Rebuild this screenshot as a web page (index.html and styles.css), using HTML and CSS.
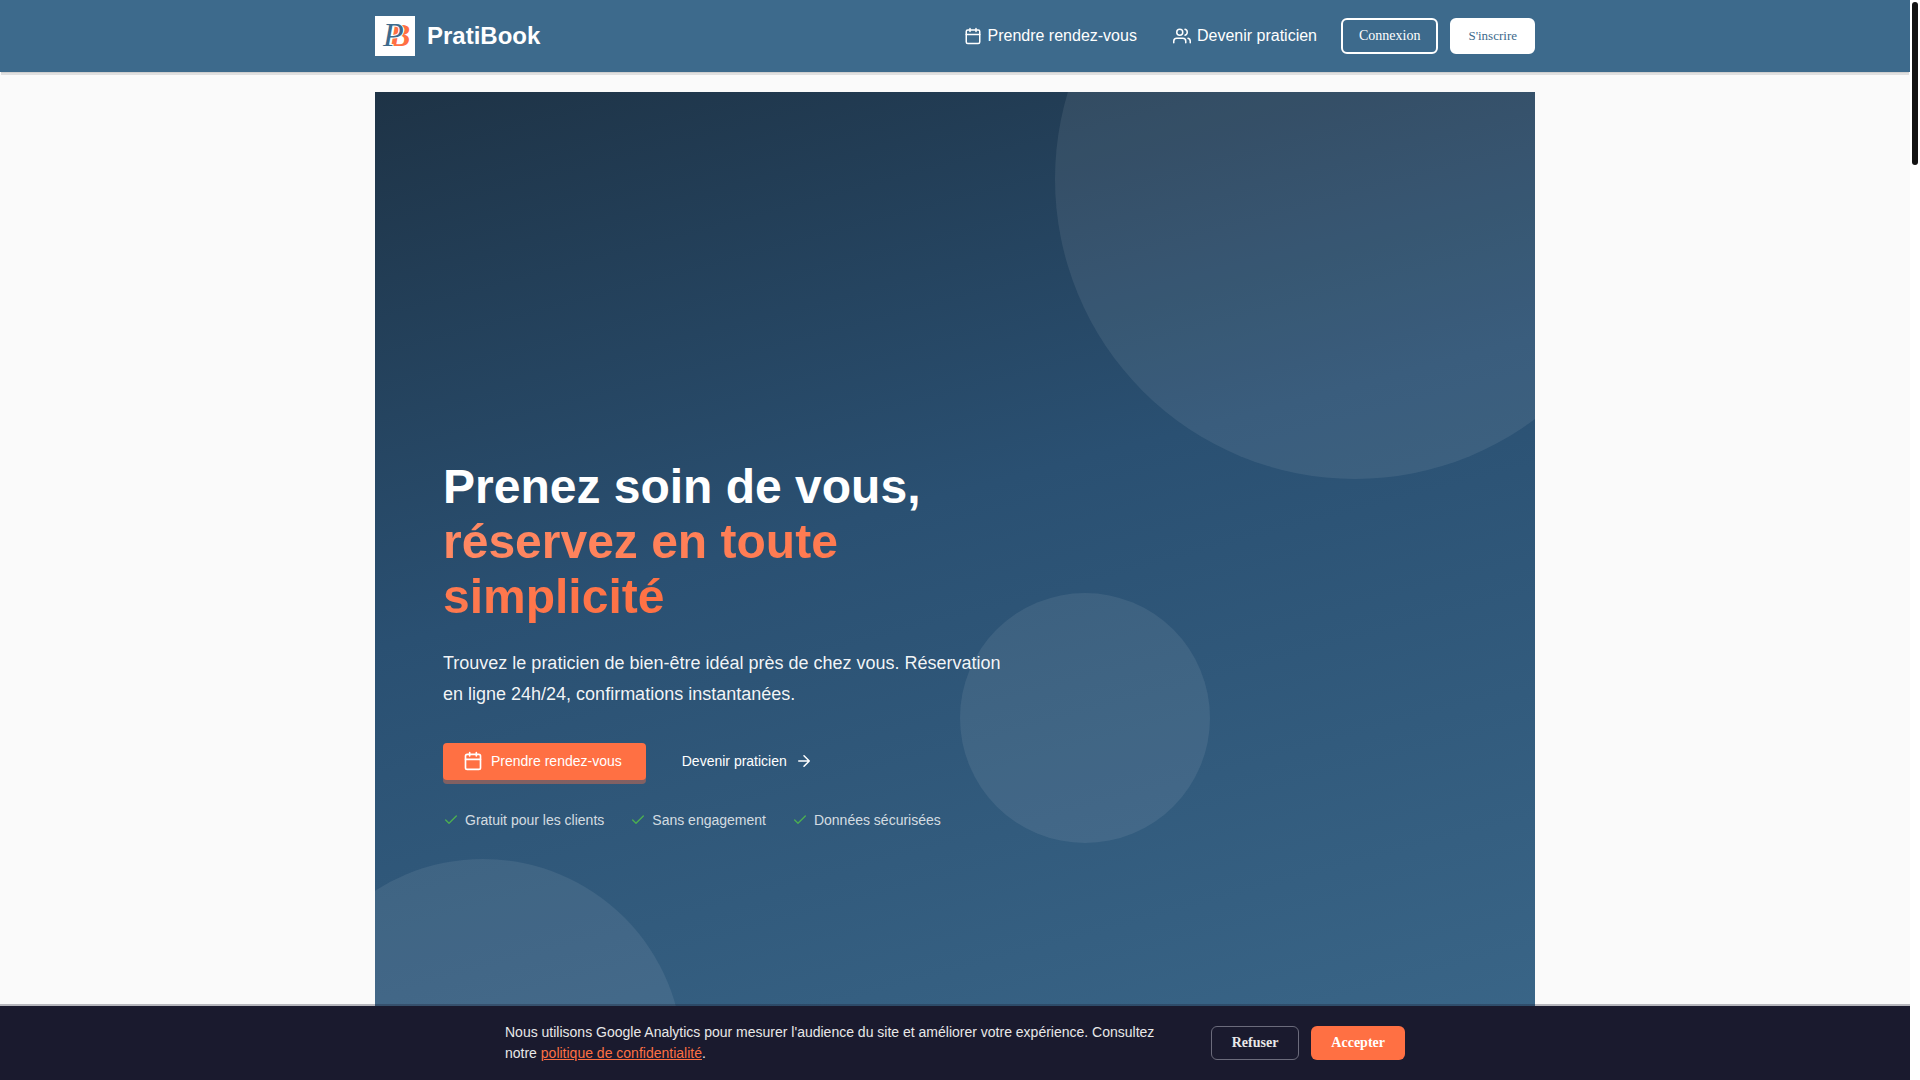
FILE: index.html
```html
<!DOCTYPE html>
<html lang="fr">
<head>
    <meta charset="UTF-8">
    <meta name="viewport" content="width=device-width, initial-scale=1.0">
    <title>PratiBook</title>
    <link rel="stylesheet" href="styles.css">
</head>
<body>

    <div class="page">
        <header class="header">
            <div class="container header-inner">
                <a class="brand" href="#">
                    <svg class="brand-logo" viewBox="0 0 40 40" aria-hidden="true">
                        <rect width="40" height="40" fill="#fff"/>
                        <text class="logo-b" x="14" y="30">B</text>
                        <text class="logo-p" x="8" y="30">P</text>
                    </svg>
                    <span>PratiBook</span>
                </a>

                <nav class="nav">
                    <a class="nav-link" href="#">
                        <svg class="icon" viewBox="0 0 24 24"><rect x="3" y="4" width="18" height="18" rx="2"/><path d="M16 2v4M8 2v4M3 10h18"/></svg>
                        Prendre rendez-vous
                    </a>
                    <a class="nav-link" href="#">
                        <svg class="icon" viewBox="0 0 24 24"><path d="M17 21v-2a4 4 0 0 0-4-4H5a4 4 0 0 0-4 4v2"/><circle cx="9" cy="7" r="4"/><path d="M23 21v-2a4 4 0 0 0-3-3.87M16 3.13a4 4 0 0 1 0 7.75"/></svg>
                        Devenir praticien
                    </a>
                    <button type="button" class="btn-login">Connexion</button>
                    <button type="button" class="btn-signup">S'inscrire</button>
                </nav>
            </div>
        </header>

        <main class="container">
            <section class="hero">
                <div class="circle circle-top"></div>
                <div class="circle circle-middle"></div>
                <div class="circle circle-bottom"></div>

                <div class="hero-content">
                    <h1>Prenez soin de vous,<br><span class="highlight">réservez en toute simplicité</span></h1>
                    <p class="hero-text">Trouvez le praticien de bien-être idéal près de chez vous. Réservation en ligne 24h/24, confirmations instantanées.</p>

                    <div class="hero-actions">
                        <a class="btn-primary" href="#">
                            <svg class="icon icon-large" viewBox="0 0 24 24"><rect x="3" y="4" width="18" height="18" rx="2"/><path d="M16 2v4M8 2v4M3 10h18"/></svg>
                            Prendre rendez-vous
                        </a>
                        <a class="btn-secondary" href="#">
                            Devenir praticien
                            <svg class="icon" viewBox="0 0 24 24"><path d="M5 12h14M12 5l7 7-7 7"/></svg>
                        </a>
                    </div>

                    <ul class="features">
                        <li><svg class="icon icon-check" viewBox="0 0 24 24"><path d="M20 6 9 17l-5-5"/></svg>Gratuit pour les clients</li>
                        <li><svg class="icon icon-check" viewBox="0 0 24 24"><path d="M20 6 9 17l-5-5"/></svg>Sans engagement</li>
                        <li><svg class="icon icon-check" viewBox="0 0 24 24"><path d="M20 6 9 17l-5-5"/></svg>Données sécurisées</li>
                    </ul>
                </div>
            </section>
        </main>

        <!-- Cookie banner -->
        <div class="cookies">
            <div class="cookies-inner">
                <p>Nous utilisons Google Analytics pour mesurer l'audience du site et améliorer votre expérience. Consultez notre <a href="#">politique de confidentialité</a>.</p>
                <div class="cookies-actions">
                    <button type="button" class="btn-refuse">Refuser</button>
                    <button type="button" class="btn-accept">Accepter</button>
                </div>
            </div>
        </div>
    </div>

    <div class="scrollbar"><div class="scrollbar-thumb"></div></div>

</body>
</html>
```

FILE: styles.css
```css
* {
    box-sizing: border-box;
}

body {
    margin: 0;
    height: 100vh;
    display: flex;
    overflow: hidden;
    background-color: #fafafa;
    font-family: 'Liberation Sans', Arial, sans-serif;
    font-size: 16px;
}

a {
    color: inherit;
    text-decoration: none;
}

button {
    font-family: 'Liberation Serif', 'Times New Roman', serif;
    border-radius: 6px;
    cursor: pointer;
}

.page {
    flex: 1;
    min-width: 0;
    position: relative;
    overflow: hidden;
}

.container {
    max-width: 1200px;
    margin: 0 auto;
    padding: 0 20px;
}

.icon {
    width: 18px;
    height: 18px;
    flex-shrink: 0;
    fill: none;
    stroke: currentColor;
    stroke-width: 2;
    stroke-linecap: round;
    stroke-linejoin: round;
}

/* Header */
.header {
    background-color: #3d6a8c;
    color: white;
    box-shadow: 0 2px 0 -1px #cfcfcf, 0 4px 0 -1px #e0e0e0;
}

.header-inner {
    height: 72px;
    display: flex;
    align-items: center;
    justify-content: space-between;
}

.brand {
    display: flex;
    align-items: center;
    gap: 12px;
    font-size: 24px;
    font-weight: bold;
}

.brand-logo {
    width: 40px;
    height: 40px;
}

.logo-p,
.logo-b {
    font-family: 'Liberation Serif', serif;
    font-style: italic;
}

.logo-p {
    font-weight: normal;
    font-size: 34px;
    fill: #3d6a8c;
    stroke: white;
    stroke-width: 2px;
    paint-order: stroke;
}

.logo-b {
    font-weight: bold;
    font-size: 32px;
    fill: #ff7043;
}

.nav {
    display: flex;
    align-items: center;
    gap: 12px;
}

.nav-link {
    display: flex;
    align-items: center;
    gap: 6px;
    padding: 0 12px;
}

.btn-login,
.btn-signup {
    height: 36px;
    padding: 0 16px;
    border: 2px solid white;
}

.btn-login {
    background-color: transparent;
    color: white;
    font-size: 14px;
}

.btn-signup {
    background-color: white;
    color: #3d6a8c;
    font-size: 13px;
}

/* Hero */
.hero {
    position: relative;
    min-height: 100vh;
    margin-top: 20px;
    padding: 22px 68px 0;
    display: flex;
    align-items: center;
    overflow: hidden;
    color: white;
    background: linear-gradient(165deg, #1e3346 0%, #2a5072 40%, #3d6a8c 100%);
}

.circle {
    position: absolute;
    border-radius: 50%;
    background-color: rgba(255, 255, 255, 0.08);
}

.circle-top {
    width: 600px;
    height: 600px;
    top: -213px;
    right: -120px;
}

.circle-middle {
    width: 250px;
    height: 250px;
    top: 501px;
    right: 325px;
}

.circle-bottom {
    width: 400px;
    height: 400px;
    top: 767px;
    left: -92px;
}

.hero-content {
    position: relative;
    max-width: 580px;
}

h1 {
    margin: 0 0 24px;
    font-size: 48px;
    line-height: 55px;
}

.highlight {
    background: linear-gradient(135deg, #ff8a65, #ff7043);
    background-clip: text;
    -webkit-background-clip: text;
    color: transparent;
}

.hero-text {
    margin: 0 0 33px;
    font-size: 18px;
    line-height: 31px;
    color: rgba(255, 255, 255, 0.95);
}

.hero-actions {
    display: flex;
    gap: 16px;
    margin-bottom: 32px;
    font-size: 14px;
}

.btn-primary,
.btn-secondary {
    display: flex;
    align-items: center;
    gap: 8px;
    height: 37px;
    padding: 0 20px;
    border-radius: 4px;
}

.btn-primary {
    padding-right: 24px;
    background-color: #ff7043;
    box-shadow: 0 4px 0 rgba(255, 112, 67, 0.4);
}

.icon-large {
    width: 20px;
    height: 20px;
}

.features {
    display: flex;
    gap: 26px;
    margin: 0;
    padding: 0;
    list-style: none;
    font-size: 14px;
    color: rgba(255, 255, 255, 0.8);
}

.features li {
    display: flex;
    align-items: center;
    gap: 6px;
}

.icon-check {
    width: 16px;
    height: 16px;
    color: #4caf50;
}

/* Cookie banner */
.cookies {
    position: absolute;
    left: 0;
    right: 0;
    bottom: 0;
    padding: 16px 20px;
    background-color: #1a1a2e;
    color: #e8e8e8;
    box-shadow: 0 -2px 0 rgba(26, 26, 46, 0.3);
}

.cookies-inner {
    max-width: 900px;
    margin: 0 auto;
    display: flex;
    align-items: center;
    justify-content: space-between;
    gap: 24px;
}

.cookies p {
    flex: 1;
    margin: 0;
    font-size: 14px;
    line-height: 21px;
}

.cookies a {
    color: #ff7043;
    text-decoration: underline;
}

.cookies-actions {
    display: flex;
    gap: 12px;
}

.btn-refuse,
.btn-accept {
    height: 34px;
    padding: 0 20px;
    font-size: 14px;
    font-weight: bold;
}

.btn-refuse {
    background-color: transparent;
    border: 1px solid #6b6b7b;
    color: #e8e8e8;
}

.btn-accept {
    background-color: #ff7043;
    border: none;
    color: white;
}

/* Scrollbar */
.scrollbar {
    width: 10px;
    padding: 2px;
    background-color: white;
}

.scrollbar-thumb {
    height: 163px;
    border-radius: 3px;
    background-color: #121212;
}
```
